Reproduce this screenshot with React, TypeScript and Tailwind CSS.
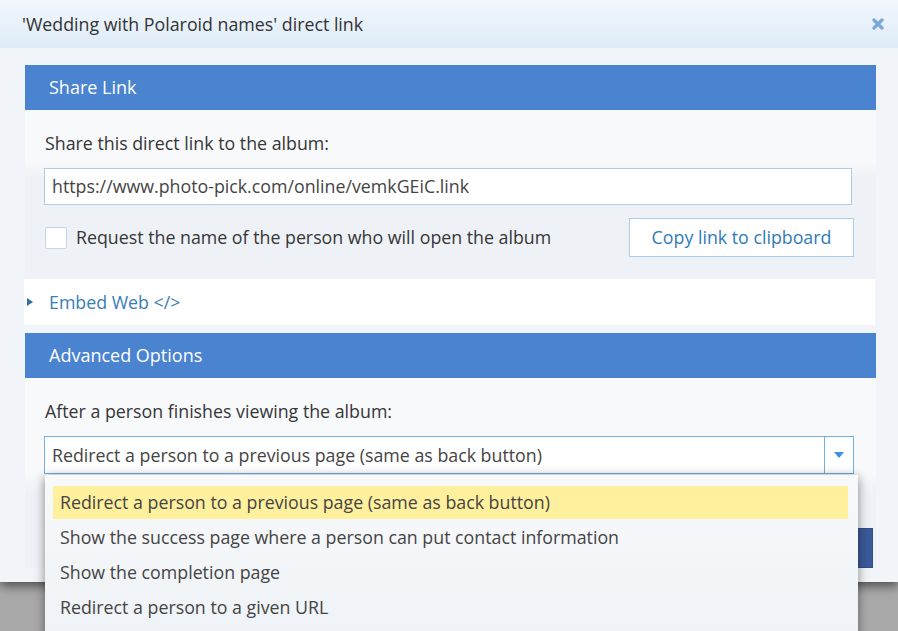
import React from "react";

const font = { fontFamily: "'Open Sans', 'Noto Sans', sans-serif" };

function PanelHeader({ title }: { title: string }) {
  return (
    <div className="flex h-[45px] items-center bg-[#4a83d0] pl-[24px] text-[18px] text-white">
      {title}
    </div>
  );
}

export default function App() {
  const options = [
    "Redirect a person to a previous page (same as back button)",
    "Show the success page where a person can put contact information",
    "Show the completion page",
    "Redirect a person to a given URL",
  ];
  return (
    <div
      className="relative h-[631px] w-[898px] overflow-hidden bg-[#a9a9a9] text-[17.8px] text-[#363636]"
      style={font}
    >
      {/* dialog */}
      <div className="relative flex h-[582px] flex-col bg-[#f1f4f8] shadow-[0_4px_10px_rgba(0,0,0,0.55)]">
        {/* title bar */}
        <div className="flex h-[48px] items-center justify-between bg-gradient-to-b from-[#f2f7fc] to-[#deebf7] pl-[22px] pr-[14px]">
          <span className="text-[#333]">'Wedding with Polaroid names' direct link</span>
          <svg width="12" height="12" viewBox="0 0 12 12" className="mb-[1px]">
            <path d="M2 2 L10 10 M10 2 L2 10" stroke="#7aa8d4" strokeWidth="3.2" strokeLinecap="round" />
          </svg>
        </div>

        {/* body */}
        <div className="flex flex-col px-[25px] pt-[17px]">
          {/* Share Link */}
          <div className="w-[851px]">
            <PanelHeader title="Share Link" />
            <div className="flex flex-col bg-gradient-to-b from-[#f8f9fb] from-30% to-[#eef2f6] to-40% pb-[21px] pl-[20px] pr-[19px] pt-[22px]">
              <div className="leading-[22px]">Share this direct link to the album:</div>
              <div className="ml-[-1px] mt-[14px] flex h-[37px] w-[808px] items-center border border-[#abcdea] bg-white pl-[7px] text-[#444]">
                https://www.photo-pick.com/online/vemkGEiC.link
              </div>
              <div className="mt-[13px] flex items-center justify-between pr-[3px]">
                <div className="flex items-center gap-[9px]">
                  <div className="h-[22px] w-[22px] rounded-[2px] border border-[#c6d6e6] bg-white" />
                  <span>Request the name of the person who will open the album</span>
                </div>
                <button className="flex h-[39px] w-[225px] items-center justify-center border border-[#abcdea] bg-white text-[#2f7bb8]">
                  Copy link to clipboard
                </button>
              </div>
            </div>
          </div>

          {/* Embed web */}
          <div className="ml-[-1px] mt-[1px] flex h-[46px] w-[851px] items-center bg-white">
            <svg width="6" height="8" viewBox="0 0 6 8" className="ml-[3px]">
              <path d="M0 0 L6 4 L0 8 Z" fill="#2f6fa8" />
            </svg>
            <span className="ml-[16px] text-[#3a7db6]">Embed Web &lt;/&gt;</span>
          </div>

          {/* Advanced options */}
          <div className="mt-[8px] w-[851px]">
            <PanelHeader title="Advanced Options" />
            <div className="flex flex-col bg-gradient-to-b from-[#f8f9fb] from-50% to-[#eef2f6] to-60% pl-[19px] pt-[22px]">
              <div className="pl-[1px] leading-[22px]">After a person finishes viewing the album:</div>
              <div className="mt-[14px] flex h-[38px] w-[810px] items-stretch border border-[#70b0e6] bg-white">
                <div className="flex flex-1 items-center pl-[7px] text-[#444]">
                  Redirect a person to a previous page (same as back button)
                </div>
                <div className="flex w-[29px] items-center justify-center border-l border-[#70b0e6]">
                  <svg width="10" height="6" viewBox="0 0 10 6">
                    <path d="M0 0 L10 0 L5 6 Z" fill="#3a92e4" />
                  </svg>
                </div>
              </div>
              <div className="mt-[54px] flex justify-end pr-[3px]">
                <button className="h-[40px] w-[120px] border border-[#2f4f8a] bg-[#3b5a9a] text-white">Save</button>
              </div>
            </div>
          </div>
        </div>
      </div>

      {/* dropdown list */}
      <div className="absolute left-[45px] top-[475px] h-[170px] w-[813px] bg-gradient-to-b from-[#f8f9fb] to-[#eef2f6] px-[8px] pt-[11px] text-[#444] shadow-[0_2px_10px_rgba(0,0,0,0.45)]">
        {options.map((o, i) => (
          <div
            key={o}
            className={
              i === 0
                ? "mb-[1px] flex h-[33px] w-[795px] items-center bg-[#fff09e] pl-[7px]"
                : "flex h-[35px] items-center pl-[7px]"
            }
          >
            {o}
          </div>
        ))}
      </div>
    </div>
  );
}
